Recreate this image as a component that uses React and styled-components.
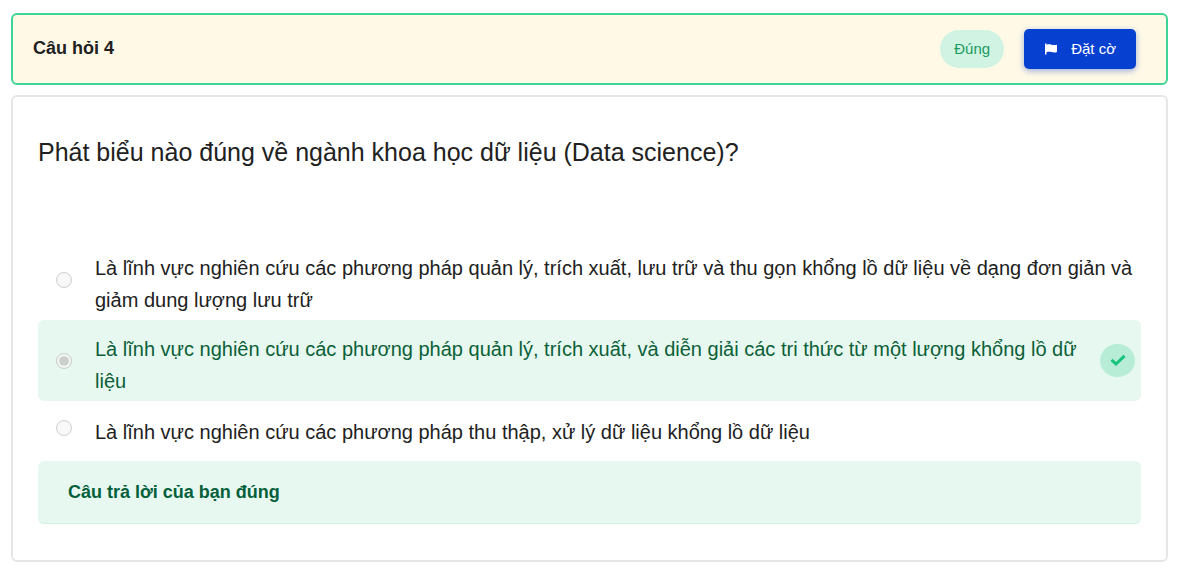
import React from "react";
import styled, { createGlobalStyle } from "styled-components";

const GlobalStyle = createGlobalStyle`
  *, *::before, *::after { box-sizing: border-box; }
  body {
    margin: 0;
    background: #fff;
    color: #212121;
    font-family: "Liberation Sans", Arial, sans-serif;
  }
`;

const Page = styled.main`
  display: flex;
  flex-direction: column;
  gap: 10px;
  padding: 13px 24px 13px 11px;
`;

const Header = styled.header`
  display: flex;
  justify-content: space-between;
  align-items: flex-start;
  padding: 14px 30px 14px 20px;
  border: 2px solid #3dd598;
  border-radius: 6px;
  background: #fff9e6;
`;

const QuestionNumber = styled.h1`
  margin: 8px 0 0;
  font-size: 18px;
  line-height: 22px;
  font-weight: 700;
`;

const Actions = styled.div`
  display: flex;
  align-items: center;
  gap: 20px;
`;

const StatusPill = styled.span`
  padding: 9px 14px;
  border-radius: 20px;
  background: #d0f3e4;
  color: #1c9a60;
  font-size: 15px;
  line-height: 20px;
`;

const FlagButton = styled.button`
  display: flex;
  align-items: center;
  gap: 13px;
  height: 40px;
  padding: 0 20px;
  border: 0;
  border-radius: 5px;
  background: #0540d0;
  color: #fff;
  font: 15px/20px "Liberation Sans", Arial, sans-serif;
  box-shadow: 0 2px 6px rgba(5, 64, 208, 0.4);
  cursor: pointer;
`;

const Card = styled.section`
  padding: 25px;
  border: 2px solid #e6e6e6;
  border-radius: 6px;
`;

const Fieldset = styled.fieldset`
  min-width: 0;
  margin: 0;
  padding: 0;
  border: 0;
`;

const Question = styled.legend`
  margin-bottom: 71px;
  padding: 14px 0 0;
  font-size: 25px;
  line-height: 32px;
`;

const Option = styled.label`
  display: flex;
  align-items: center;
  gap: 23px;
  min-height: ${(p) => (p.$short ? 60 : 81)}px;
  padding: 0 6px ${(p) => (p.$short ? 6 : 0)}px 18px;
  border-radius: 6px;
  background: ${(p) => (p.$correct ? "#e7f8f0" : "transparent")};
  color: ${(p) => (p.$correct ? "#0b6038" : "inherit")};
`;

const Radio = styled.input`
  flex: none;
  width: 16px;
  height: 16px;
  margin: 0;
`;

const OptionText = styled.span`
  flex: 1;
  padding: 10px 0 2px;
  font-size: 20px;
  line-height: 32px;
`;

const CheckBadge = styled.span`
  display: flex;
  flex: none;
  align-items: center;
  justify-content: center;
  width: 35px;
  height: 33px;
  border-radius: 50%;
  background: #b7edd6;
  color: #17c37b;
`;

const Feedback = styled.p`
  margin: 0 0 11px;
  padding: 21px 30px;
  border-bottom: 1px solid #d0f0e2;
  border-radius: 6px;
  background: #e7f8f0;
  color: #04603a;
  font-size: 18px;
  line-height: 20px;
  font-weight: 700;
`;

const FlagIcon = () => (
  <svg width="14" height="12" viewBox="0 0 14 12" fill="currentColor" aria-hidden="true">
    <path d="M1 0.500h1.500v1.200c1.800-.5 3.300-.5 5 0s3.500.6 5.500 0V9c-2 .7-3.700.6-5.500.1s-3.200-.5-5 .1V11.500H1z" />
  </svg>
);

const CheckIcon = () => (
  <svg width="16" height="14" viewBox="0 0 16 14" fill="none" stroke="currentColor" strokeWidth="3" aria-hidden="true">
    <path d="M1.500 5.800 6 10 14.500 1.800" />
  </svg>
);

const options = [
  {
    text: "Là lĩnh vực nghiên cứu các phương pháp quản lý, trích xuất, lưu trữ và thu gọn khổng lồ dữ liệu về dạng đơn giản và giảm dung lượng lưu trữ",
  },
  {
    text: "Là lĩnh vực nghiên cứu các phương pháp quản lý, trích xuất, và diễn giải các tri thức từ một lượng khổng lồ dữ liệu",
    correct: true,
  },
  {
    text: "Là lĩnh vực nghiên cứu các phương pháp thu thập, xử lý dữ liệu khổng lồ dữ liệu",
    short: true,
  },
];

export default function App() {
  return (
    <>
      <GlobalStyle />
      <Page lang="vi">
        <Header>
          <QuestionNumber>Câu hỏi 4</QuestionNumber>
          <Actions>
            <StatusPill>Đúng</StatusPill>
            <FlagButton type="button">
              <FlagIcon />
              Đặt cờ
            </FlagButton>
          </Actions>
        </Header>
        <Card>
          <Fieldset>
            <Question>Phát biểu nào đúng về ngành khoa học dữ liệu (Data science)?</Question>
            {options.map((o, i) => (
              <Option key={i} $correct={o.correct} $short={o.short}>
                <Radio type="radio" name="answer" disabled defaultChecked={o.correct} />
                <OptionText>{o.text}</OptionText>
                {o.correct && (
                  <CheckBadge>
                    <CheckIcon />
                  </CheckBadge>
                )}
              </Option>
            ))}
          </Fieldset>
          <Feedback>Câu trả lời của bạn đúng</Feedback>
        </Card>
      </Page>
    </>
  );
}
